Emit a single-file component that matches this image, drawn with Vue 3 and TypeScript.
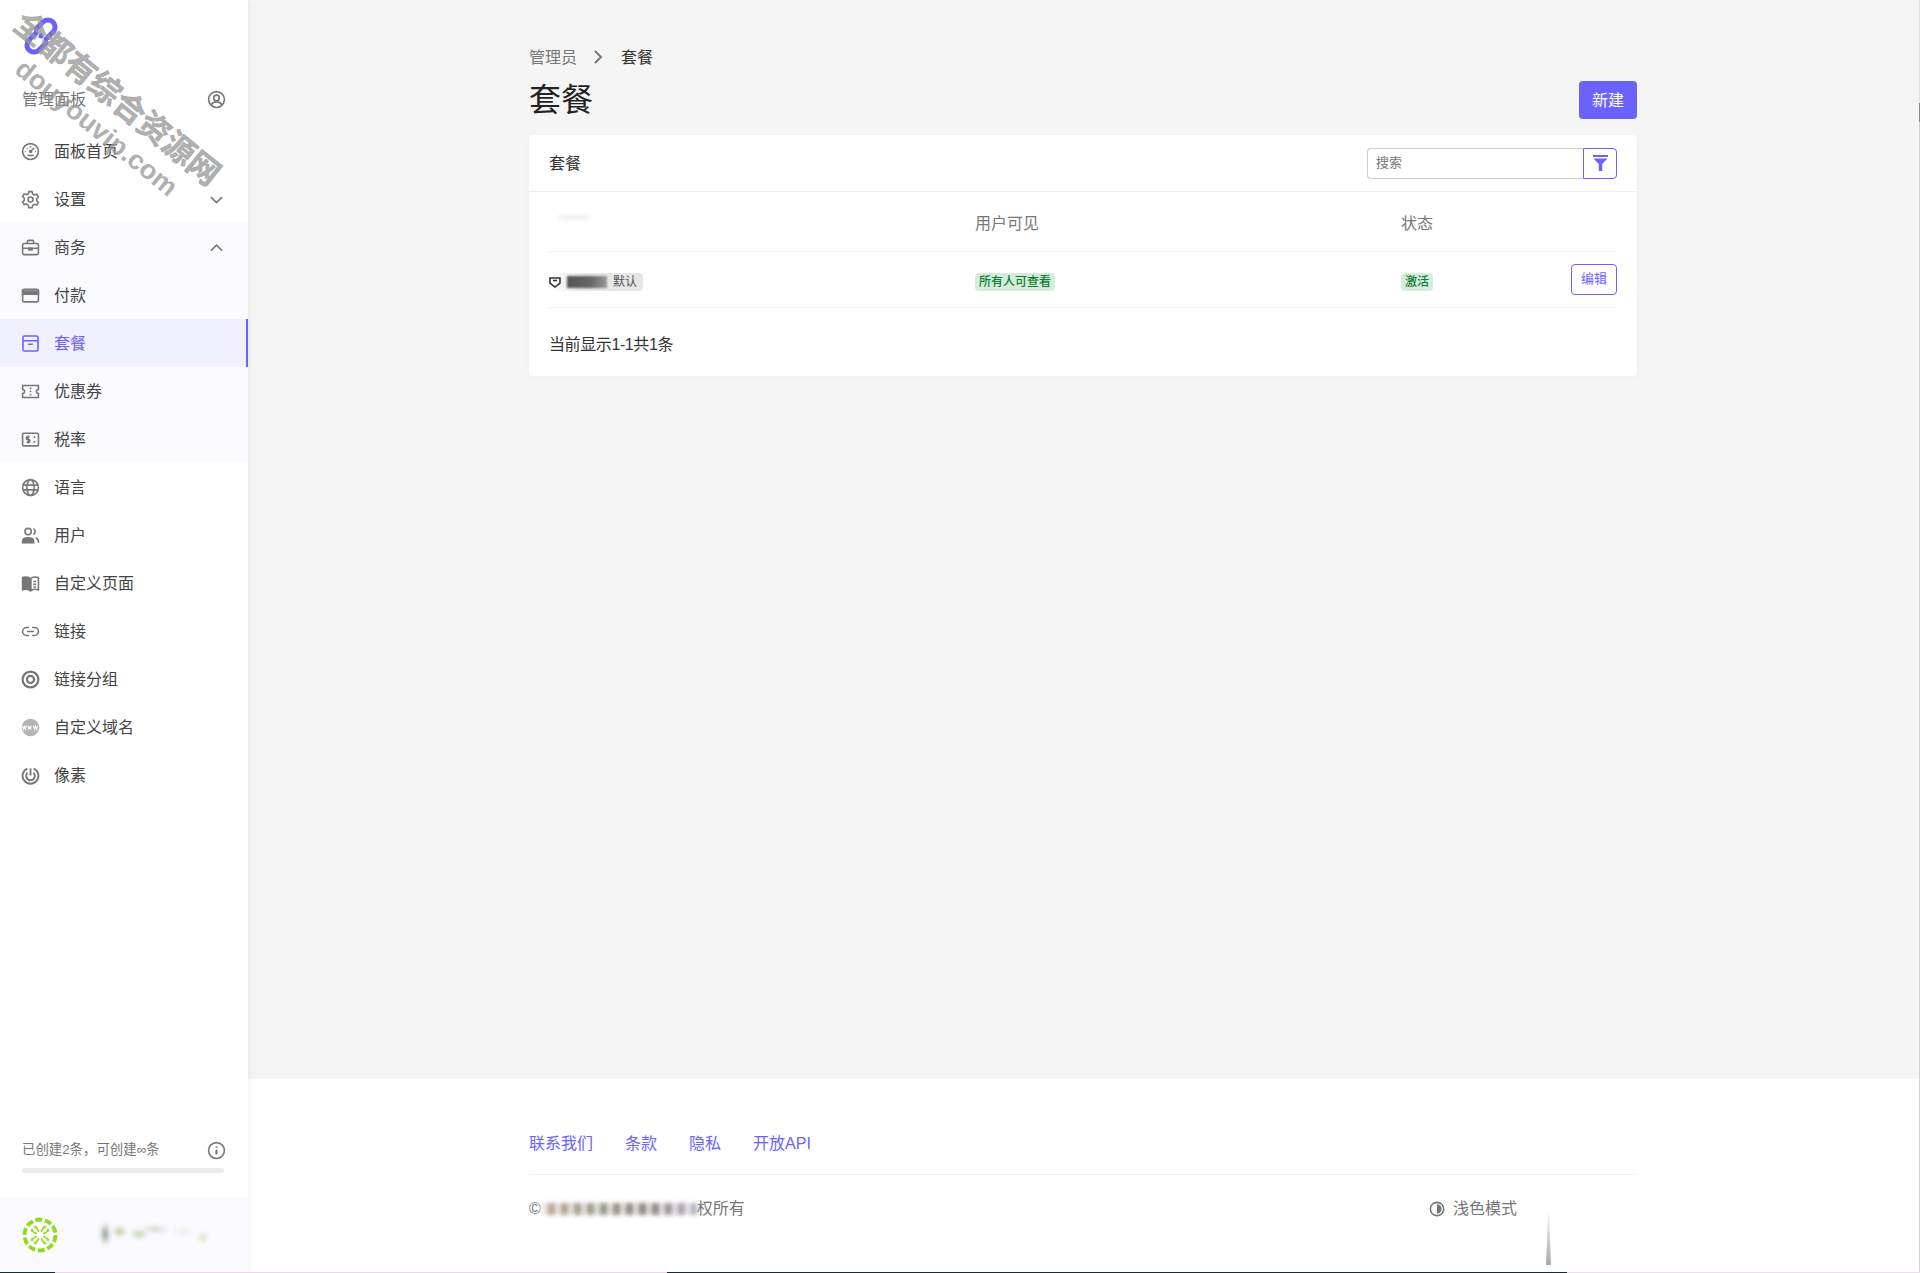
<script setup lang="ts">
interface NavItem {
  id: string
  label: string
  icon: string
  arrow?: 'up' | 'down'
  sub?: boolean
  active?: boolean
}

// icon bodies, all on a 24 box, drawn with currentColor
const ICONS: Record<string, string> = {
  dashboard: `<circle cx="12" cy="12" r="10"/><path d="M12 5v2M6 12H5M19 12h-1M7.500 7.500l.8.8M16.500 7.500L12 12"/><circle cx="12" cy="12" r="1.200" fill="currentColor"/><path d="M8 17h8"/>`,
  settings: `<circle cx="12" cy="12" r="3.200"/><path d="M10 2h4l.7 3 2.300 1.300 3-.9 2 3.400-2.200 2.100v2.600l2.200 2.100-2 3.400-3-.9-2.300 1.300-.7 3h-4l-.7-3L7 17.600l-3 .9-2-3.400 2.200-2.100v-2.600L2 8.300l2-3.400 3 .9L9.300 5z"/>`,
  briefcase: `<rect x="2" y="7" width="20" height="14" rx="2"/><path d="M8 7V4.500A1.500 1.500 0 0 1 9.500 3h5A1.500 1.500 0 0 1 16 4.500V7M2 13h20"/><path d="M10 13h4v2h-4z" fill="currentColor"/>`,
  card: `<rect x="2" y="4" width="20" height="16" rx="2"/><path d="M2 6.500h20v4H2z" fill="currentColor"/>`,
  box: `<rect x="2.500" y="2.500" width="19" height="19" rx="2"/><path d="M2.500 8.500h19M9 13h6"/>`,
  ticket: `<path d="M2 4.500h20v5a2.500 2.500 0 0 0 0 5v5H2v-5a2.500 2.500 0 0 0 0-5z"/><path d="M12 7v2M12 11v2M12 15v2"/>`,
  tax: `<rect x="2" y="4" width="20" height="16" rx="1.500"/><path d="M11 8.500H8.500a1.700 1.700 0 0 0 0 3.500h1a1.700 1.700 0 0 1 0 3.500H7M9 7v10M16 9h2M16 15h2"/>`,
  globe: `<circle cx="12" cy="12" r="10"/><ellipse cx="12" cy="12" rx="4.500" ry="10"/><path d="M2.500 9h19M2.500 15h19"/>`,
  users: `<circle cx="9" cy="7" r="4"/><path d="M2 21v-1.500C2 16.500 5 15 9 15s7 1.500 7 4.500V21z" fill="currentColor"/><path d="M15.500 3.300a4 4 0 0 1 0 7.400M18.500 15.300c2.200.8 3.500 2.200 3.500 4.200V21"/>`,
  book: `<path d="M2 4.500c3-1 6.500-1 9.500 1V21c-3-2-6.500-2-9.500-1z" fill="currentColor"/><path d="M12.500 5.500c3-2 6.500-2 9.500-1V20c-3-1-6.500-1-9.500 1zM15.500 9.500h3.500M15.500 13h3.500M15.500 16.500h3.500"/>`,
  link: `<path d="M10 7H7a5 5 0 0 0 0 10h3M14 7h3a5 5 0 0 1 0 10h-3M7.500 12h9"/>`,
  target: `<circle cx="12" cy="12" r="10" stroke-width="2.800"/><circle cx="12" cy="12" r="4.500" stroke-width="2.800"/>`,
  www: `<circle cx="12" cy="12" r="11" fill="currentColor" opacity=".55" stroke="none"/><path d="M2 9.500l1.200 5 1.300-4 1.300 4 1.200-5M9 9.500l1 5 1-4 1 4 1-5M15.800 9.500l1.200 5 1.300-4 1.300 4 1.200-5" stroke="#fff" stroke-width="1.300"/>`,
  pixel: `<path d="M8 3.200a10 10 0 1 0 8 0" stroke-width="2.400"/><path d="M8.300 8.500a5.500 5.500 0 1 0 7.400 0" stroke-width="2.400"/><path d="M12 3v9" stroke-width="2.400"/>`,
}

const NAV: NavItem[] = [
  { id: 'home', label: '面板首页', icon: 'dashboard' },
  { id: 'settings', label: '设置', icon: 'settings', arrow: 'down' },
  { id: 'business', label: '商务', icon: 'briefcase', arrow: 'up', sub: true },
  { id: 'payments', label: '付款', icon: 'card', sub: true },
  { id: 'plans', label: '套餐', icon: 'box', sub: true, active: true },
  { id: 'coupons', label: '优惠券', icon: 'ticket', sub: true },
  { id: 'tax', label: '税率', icon: 'tax', sub: true },
  { id: 'lang', label: '语言', icon: 'globe' },
  { id: 'users', label: '用户', icon: 'users' },
  { id: 'pages', label: '自定义页面', icon: 'book' },
  { id: 'links', label: '链接', icon: 'link' },
  { id: 'groups', label: '链接分组', icon: 'target' },
  { id: 'domains', label: '自定义域名', icon: 'www' },
  { id: 'pixels', label: '像素', icon: 'pixel' },
]

const FOOT_LINKS = ['联系我们', '条款', '隐私', '开放API']
</script>

<template>
  <div class="page">
    <aside class="side">
      <div class="side__logo">
        <svg width="40" height="40" viewBox="0 0 40 40" fill="none" stroke="#6b61ff" stroke-width="5" stroke-linecap="round">
          <path d="M15 13l7-7a7 7 0 0 1 10 10l-7 7" />
          <path d="M25 27l-7 7a7 7 0 0 1-10-10l7-7" />
          <circle cx="20" cy="20" r="2.500" fill="#6b61ff" stroke="none" />
        </svg>
      </div>
      <div class="side__title">
        <span class="nudge">管理面板</span>
        <svg class="side__glyph" viewBox="0 0 24 24" fill="none" stroke="currentColor" stroke-width="2">
          <circle cx="12" cy="12" r="10" />
          <circle cx="12" cy="10" r="3.500" />
          <path d="M5.500 19c1-3 3.500-4 6.500-4s5.500 1 6.500 4" />
        </svg>
      </div>
      <nav class="side__nav">
        <a
          v-for="item in NAV"
          :key="item.id"
          class="nav-item"
          :class="{ 'nav-item--sub': item.sub, 'nav-item--active': item.active }"
        >
          <svg
            class="nav-item__icon"
            viewBox="0 0 24 24"
            fill="none"
            stroke="currentColor"
            stroke-width="2"
            v-html="ICONS[item.icon]"
          />
          <span class="nav-item__label nudge">{{ item.label }}</span>
          <svg v-if="item.arrow" class="side__glyph" viewBox="0 0 24 24" fill="none" stroke="currentColor" stroke-width="2">
            <path :d="item.arrow === 'up' ? 'M5 16l7-7 7 7' : 'M5 9l7 7 7-7'" />
          </svg>
        </a>
      </nav>
      <div class="quota">
        <div class="quota__row">
          <span>已创建2条，可创建∞条</span>
          <svg class="side__glyph" viewBox="0 0 24 24" fill="none" stroke="currentColor" stroke-width="2">
            <circle cx="12" cy="12" r="10" />
            <path d="M12 11v6M12 7v1.500" stroke-width="2.600" />
          </svg>
        </div>
        <div class="quota__bar" />
      </div>
      <div class="side__user">
        <svg width="36" height="36" viewBox="0 0 36 36">
          <circle cx="18" cy="18" r="18" fill="#fff" />
          <circle cx="18" cy="18" r="15.500" fill="none" stroke="#8fdc1f" stroke-width="4" stroke-dasharray="7 2.700" />
          <path d="M18 14l4-6 4 2-2 4-4 2zM18 22l-4 6-4-2 2-4 4-2zM14 18l-6-4 2-4 4 2 2 4zM22 18l6 4-2 4-4-2-2-4zM18 14l-4-6-4 2 2 4 4 2zM18 22l4 6 4-2-2-4-4-2zM14 18l-6 4 2 4 4-2 2-4zM22 18l6-4-2-4-4 2-2 4z" fill="#8fdc1f" stroke="#fff" stroke-width=".8" />
        </svg>
        <span class="smudge smudge--user" />
      </div>
    </aside>

    <div class="main">
      <main class="content">
        <div class="crumbs">
          <span class="crumbs__root nudge">管理员</span>
          <svg class="crumbs__sep" viewBox="0 0 24 24" fill="none" stroke="currentColor" stroke-width="2.600">
            <path d="M8 4l8 8-8 8" />
          </svg>
          <span class="nudge">套餐</span>
        </div>
        <div class="head">
          <h1 class="head__title">套餐</h1>
          <button class="btn-new"><span class="btn-new__text">新建</span></button>
        </div>

        <section class="card">
          <div class="card__head">
            <span class="card__name nudge">套餐</span>
            <div class="search">
              <input class="search__input" placeholder="搜索" />
              <button class="search__btn">
                <svg width="15" height="16" viewBox="0 0 15 16" fill="currentColor">
                  <path d="M0 0h15v2H0zM0.500 3.500h14L9.200 9v7H5.800V9z" />
                </svg>
              </button>
            </div>
          </div>
          <div class="card__body">
            <table class="table">
              <thead>
                <tr>
                  <th><span class="smudge smudge--head" /></th>
                  <th>用户可见</th>
                  <th>状态</th>
                  <th />
                </tr>
              </thead>
              <tbody>
                <tr>
                  <td>
                    <span class="chip">
                      <svg width="12" height="12" viewBox="0 0 12 12" fill="none" stroke="#333" stroke-width="1.600">
                        <path d="M1 2h10v5l-5 4-5-4z" />
                        <path d="M4 4.500h4" />
                      </svg>
                      <span class="smudge smudge--chip" />
                      <span>默认</span>
                    </span>
                  </td>
                  <td><span class="badge">所有人可查看</span></td>
                  <td><span class="badge">激活</span></td>
                  <td class="table__act"><button class="btn-edit">编辑</button></td>
                </tr>
              </tbody>
            </table>
            <p class="card__count">当前显示1-1共1条</p>
          </div>
        </section>
      </main>

      <footer class="foot">
        <div class="foot__inner">
          <div class="foot__links">
            <a v-for="link in FOOT_LINKS" :key="link">{{ link }}</a>
          </div>
          <div class="foot__bottom">
            <span class="foot__copy">©<span class="smudge smudge--copy" />权所有</span>
            <span class="foot__theme">
              <svg width="16" height="16" viewBox="0 0 24 24" fill="none" stroke="currentColor" stroke-width="2.400">
                <circle cx="12" cy="12" r="10" />
                <path d="M12 5a7 7 0 0 1 0 14z" fill="currentColor" stroke="none" />
              </svg>
              浅色模式
            </span>
          </div>
        </div>
        <span class="foot__wedge" />
      </footer>
    </div>

    <div class="mark" aria-hidden="true">
      <span class="mark__cn">全都有综合资源网</span>
      <span class="mark__url">douyouvip.com</span>
    </div>
    <span class="scroll-strip" />
    <span class="edge-strip" />
  </div>
</template>

<style>
body {
  margin: 0;
}
</style>

<style scoped>
.page {
  position: relative;
  display: flex;
  min-height: 100vh;
  background: #f5f5f5;
  color: #333;
  font-family: "Liberation Sans", "Noto Sans CJK SC", sans-serif;
  font-size: 16px;
  line-height: 24px;
  overflow: hidden;
}
/* the CJK face sits a pixel high in its line box */
.nudge {
  padding-top: 2px;
}

.side {
  flex: 0 0 248px;
  display: flex;
  flex-direction: column;
  background: #fff;
  box-shadow: 2px 0 5px rgba(0, 0, 0, 0.05);
  z-index: 1;
}
.side__logo {
  height: 75px;
  padding: 16px 0 0 21px;
  box-sizing: border-box;
}
.side__title {
  height: 48px;
  margin-bottom: 4px;
  padding: 0 24px 0 22px;
  display: flex;
  align-items: center;
  justify-content: space-between;
  color: #777;
}
.side__glyph {
  width: 19px;
  height: 19px;
  margin: 0 -1.500px;
  color: #777;
  flex: none;
}

.nav-item {
  height: 48px;
  padding: 0 24px 0 22px;
  display: flex;
  align-items: center;
  gap: 16px;
  color: #444;
  box-sizing: border-box;
}
.nav-item--sub {
  background: #fafaff;
}
.nav-item--active {
  background: #f0f0ff;
  color: #6b61ff;
  border-right: 2px solid #6b61ff;
  padding-right: 22px;
}
.nav-item__icon {
  width: 19px;
  height: 19px;
  margin: 0 -1.500px;
  color: #777;
  flex: none;
}
.nav-item--active .nav-item__icon {
  color: #6b61ff;
}
.nav-item__label {
  flex: 1;
}

.quota {
  margin-top: auto;
  padding: 0 24px 24px 22px;
  font-size: 13.400px;
  color: #777;
}
.quota__row {
  display: flex;
  align-items: center;
  justify-content: space-between;
  height: 22px;
}
.quota__bar {
  height: 5px;
  margin-top: 7px;
  border-radius: 3px;
  background: #ebebeb;
}

.side__user {
  height: 76px;
  padding: 20px 0 0 22px;
  box-sizing: border-box;
  display: flex;
  gap: 4px;
  background: #fafaff;
}

.smudge {
  display: inline-block;
  filter: blur(2px);
}
.smudge--user {
  width: 160px;
  height: 24px;
  margin-top: 5px;
  background:
    radial-gradient(ellipse 5px 12px at 27% 50%, #7d8a70, transparent),
    radial-gradient(ellipse 7px 6px at 36% 40%, #a9bc7c, transparent),
    radial-gradient(ellipse 10px 5px at 48% 50%, #b9c99a, transparent),
    radial-gradient(ellipse 14px 4px at 58% 30%, #c5cdb8, transparent),
    radial-gradient(ellipse 10px 3px at 75% 40%, #e5e2cf, transparent),
    radial-gradient(ellipse 5px 6px at 88% 65%, #cdd99b, transparent);
}
.smudge--head {
  width: 30px;
  height: 3px;
  margin-left: 10px;
  background: #e6e6e6;
  vertical-align: 10px;
}
.smudge--chip {
  width: 40px;
  height: 12px;
  background: linear-gradient(90deg, #555, #666 60%, #999);
  filter: blur(1.200px);
}
.smudge--copy {
  width: 155px;
  height: 12px;
  margin-left: 1px;
  background:
    repeating-linear-gradient(90deg, rgba(255, 255, 255, 0.7) 0 6px, transparent 6px 13px),
    linear-gradient(90deg, #c0a898, #998 35%, #8a8580 70%, #b5b0c0);
  vertical-align: -1px;
}

.main {
  flex: 1;
  min-width: 0;
  display: flex;
  flex-direction: column;
}
.content {
  flex: 1;
  width: 1108px;
  margin: 0 auto;
  padding-top: 45px;
  position: relative;
  left: -1px;
}

.crumbs {
  display: flex;
  align-items: center;
  height: 24px;
}
.crumbs__root {
  color: #777;
}
.crumbs__sep {
  width: 18px;
  height: 18px;
  margin: 0 14px 0 12px;
  color: #777;
}
.head {
  margin-top: 12px;
  display: flex;
  align-items: center;
  justify-content: space-between;
}
.head__title {
  margin: 0;
  padding-top: 1px;
  font-size: 32px;
  font-weight: 400;
  line-height: 37px;
  color: #222;
}
.btn-new {
  width: 58px;
  height: 38px;
  padding: 0;
  border: 0;
  border-radius: 4px;
  background: #6b61ff;
  color: #fff;
  font: inherit;
}
.btn-new__text {
  display: inline-block;
  padding-top: 2px;
}

.card {
  margin-top: 16px;
  background: #fff;
  border-radius: 4px;
  box-shadow: 0 1px 4px rgba(0, 0, 0, 0.03);
}
.card__head {
  height: 57px;
  padding: 0 20px;
  box-sizing: border-box;
  display: flex;
  align-items: center;
  justify-content: space-between;
  border-bottom: 1px solid #eee;
}
.card__name {
  color: #333;
}
.search {
  display: flex;
  width: 250px;
  height: 31px;
}
.search__input {
  flex: 1;
  min-width: 0;
  padding: 0 8px;
  border: 1px solid #ccc;
  border-right: 0;
  border-radius: 4px 0 0 4px;
  outline: 0;
  font: inherit;
  font-size: 13px;
}
.search__input::placeholder {
  color: #777;
}
.search__btn {
  width: 34px;
  padding: 0;
  border: 1px solid #6b61ff;
  border-radius: 0 4px 4px 0;
  background: #fff;
  color: #6b61ff;
  display: flex;
  align-items: center;
  justify-content: center;
}

.card__body {
  padding: 0 20px;
}
.table {
  width: 100%;
  table-layout: fixed;
  border-collapse: collapse;
}
.table th {
  height: 59px;
  padding: 6px 0 0;
  box-sizing: border-box;
  text-align: left;
  font-weight: 400;
  color: #777;
  border-bottom: 1px solid #eee;
}
.table th:nth-child(1),
.table th:nth-child(2) {
  width: 426px;
}
.table td {
  height: 55px;
  padding: 0;
  border-bottom: 1px solid #eee;
}
.table__act {
  text-align: right;
}
.chip {
  display: inline-flex;
  align-items: center;
  gap: 6px;
  height: 18px;
  margin-top: 4px;
  padding-right: 6px;
  border-radius: 4px;
  background: linear-gradient(90deg, #fff, #e6e6e6 40%);
  font-size: 12px;
  line-height: 18px;
  color: #555;
  vertical-align: middle;
}
.badge {
  display: inline-block;
  height: 18px;
  margin-top: 4px;
  padding: 0 4px;
  border-radius: 4px;
  background: #d4edda;
  color: #0f7a35;
  font-size: 12px;
  font-weight: 500;
  line-height: 18px;
  vertical-align: middle;
}
.btn-edit {
  width: 46px;
  height: 31px;
  padding: 0;
  border: 1px solid #6b61ff;
  border-radius: 4px;
  background: #fff;
  color: #6b61ff;
  font: inherit;
  font-size: 13px;
  vertical-align: middle;
}
.card__count {
  margin: 0;
  padding: 25px 0 19px;
  color: #333;
  letter-spacing: -0.400px;
}

.foot {
  position: relative;
  height: 194px;
  background: #fff;
}
.foot__inner {
  width: 1108px;
  margin: 0 auto;
  position: relative;
  left: -1px;
}
.foot__links {
  height: 96px;
  padding-top: 53px;
  box-sizing: border-box;
  display: flex;
  gap: 32px;
  color: #6b61ff;
  border-bottom: 1px solid #f2f2f2;
}
.foot__bottom {
  padding-top: 22px;
  display: flex;
  justify-content: space-between;
  color: #777;
}
.foot__copy {
  display: inline-flex;
  align-items: center;
}
.foot__theme {
  display: inline-flex;
  align-items: center;
  gap: 8px;
  margin-right: 120px;
}
.foot__wedge {
  position: absolute;
  left: 1298px;
  top: 134px;
  width: 5px;
  height: 52px;
  background: linear-gradient(#f4f4f4, #aaa);
  clip-path: polygon(40% 0, 60% 0, 100% 100%, 0 100%);
  filter: blur(0.600px);
}

.mark {
  position: absolute;
  inset: 0;
  pointer-events: none;
  z-index: 2;
  font-weight: 700;
  color: rgba(150, 150, 150, 0.75);
  white-space: nowrap;
}
.mark__cn {
  position: absolute;
  left: 15px;
  top: 13px;
  font-size: 32px;
  line-height: 32px;
  letter-spacing: -0.300px;
  -webkit-text-stroke: 0.500px rgba(150, 150, 150, 0.75);
  transform: rotate(39deg);
  transform-origin: 16px 16px;
}
.mark__url {
  position: absolute;
  left: 19px;
  top: 50px;
  font-size: 27px;
  line-height: 30px;
  transform: rotate(39deg);
  transform-origin: 0 15px;
}

.scroll-strip {
  position: absolute;
  right: 0;
  top: 0;
  bottom: 0;
  width: 1px;
  z-index: 3;
  background: linear-gradient(#e2e2e2 103px, #888 103px, #888 122px, #d4d4d4 122px);
}
.edge-strip {
  position: absolute;
  left: 0;
  right: 0;
  bottom: 0;
  height: 1px;
  z-index: 3;
  background: linear-gradient(90deg, #1f2a30 55px, #e4d8e8 55px, #e4d8e8 667px, #1f2a30 667px, #1f2a30 1567px, #ecdcec 1567px);
}
</style>
